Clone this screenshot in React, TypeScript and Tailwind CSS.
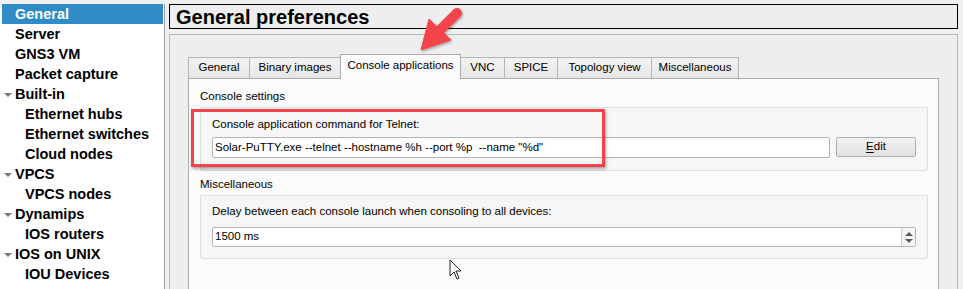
import React from 'react';

const ui = { fontFamily: '"Liberation Sans", Arial, sans-serif' };

type TreeRow = { label: string; level: 0 | 1; expander?: boolean; selected?: boolean };

const rows: TreeRow[] = [
  { label: 'General', level: 0, selected: true },
  { label: 'Server', level: 0 },
  { label: 'GNS3 VM', level: 0 },
  { label: 'Packet capture', level: 0 },
  { label: 'Built-in', level: 0, expander: true },
  { label: 'Ethernet hubs', level: 1 },
  { label: 'Ethernet switches', level: 1 },
  { label: 'Cloud nodes', level: 1 },
  { label: 'VPCS', level: 0, expander: true },
  { label: 'VPCS nodes', level: 1 },
  { label: 'Dynamips', level: 0, expander: true },
  { label: 'IOS routers', level: 1 },
  { label: 'IOS on UNIX', level: 0, expander: true },
  { label: 'IOU Devices', level: 1 },
];

const tabs = [
  { label: 'General', w: 'w-[62px]' },
  { label: 'Binary images', w: 'w-[92px]' },
  { label: 'Console applications', w: 'w-[121px]', active: true },
  { label: 'VNC', w: 'w-[45px]' },
  { label: 'SPICE', w: 'w-[54px]' },
  { label: 'Topology view', w: 'w-[95px]' },
  { label: 'Miscellaneous', w: 'w-[88px]' },
];

function Sidebar() {
  return (
    <div className="mt-[4px] w-[165px] shrink-0 border-r border-[#9c9c9c] bg-white pl-[2px] pr-px">
      {rows.map((r) => (
        <div
          key={r.label}
          className={`relative flex h-[20px] items-center pt-[2px] text-[14.5px] font-bold ${
            r.selected ? 'bg-[#308cc6] text-white' : 'text-black'
          } ${r.level === 1 ? 'pl-[23px]' : 'pl-[13px]'}`}
        >
          {r.expander && (
            <span className="absolute left-[2px] top-[9px] h-0 w-0 border-x-[4px] border-t-[4px] border-x-transparent border-t-[#7a7a7a]" />
          )}
          {r.label}
        </div>
      ))}
    </div>
  );
}

function Tabs() {
  return (
    <div className="flex h-[24px] items-end">
      {tabs.map((t, i) =>
        t.active ? (
          <div
            key={t.label}
            className={`relative z-10 -mb-px -ml-px flex h-[25px] items-center justify-center border-x border-t border-[#acacac] bg-[#fbfbfb] pb-[2px] text-[11.5px] ${t.w}`}
          >
            {t.label}
          </div>
        ) : (
          <div
            key={t.label}
            className={`flex h-[21px] items-center justify-center border-x border-t border-[#b4b4b4] bg-gradient-to-b from-[#f2f2f2] to-[#e6e6e6] text-[11.5px] ${t.w} ${i === 0 ? '' : '-ml-px'}`}
          >
            {t.label}
          </div>
        )
      )}
    </div>
  );
}

function GroupLabel({ children, top }: { children: React.ReactNode; top: string }) {
  return <div className={`flex h-[16px] items-center text-[11.5px] ${top}`}>{children}</div>;
}

function Pane() {
  return (
    <div className="flex-1 border border-[#acacac] bg-[#fbfbfb] pr-[10px] pl-[11px]">
      <GroupLabel top="mt-[10px]">Console settings</GroupLabel>
      <div className="mt-[2px] h-[64px] rounded-[2px] border border-[#dedede] bg-[#f6f6f6] px-[11px] pt-[9px]">
        <div className="flex h-[16px] items-center text-[11.5px]">Console application command for Telnet:</div>
        <div className="mt-[4px] flex h-[21px] gap-[6px]">
          <div className="flex flex-1 items-center rounded-[2px] border border-[#b4b4b4] bg-white pl-[2px] text-[11.5px] whitespace-pre">
            Solar-PuTTY.exe --telnet --hostname %h --port %p  --name "%d"
          </div>
          <div className="flex h-[20px] w-[80px] items-center justify-center rounded-[2px] border border-[#adadad] bg-gradient-to-b from-[#f2f2f2] to-[#e2e2e2] text-[11.5px]">
            <span className="underline underline-offset-[2px]">E</span>dit
          </div>
        </div>
      </div>
      <GroupLabel top="mt-[6px]">Miscellaneous</GroupLabel>
      <div className="mt-[2px] h-[64px] rounded-[2px] border border-[#dedede] bg-[#f6f6f6] px-[11px] pt-[8px]">
        <div className="flex h-[16px] items-center text-[11.5px]">
          Delay between each console launch when consoling to all devices:
        </div>
        <div className="mt-[7px] flex h-[20px] rounded-[2px] border border-[#b4b4b4] bg-white">
          <div className="flex flex-1 items-center pl-[2px] text-[11.5px]">1500 ms</div>
          <div className="flex w-[14px] flex-col items-center justify-center gap-[3px] border-l border-[#d0d0d0] bg-[#f4f4f4]">
            <span className="h-0 w-0 border-x-[4px] border-b-[4px] border-x-transparent border-b-[#5a5a5a]" />
            <span className="h-0 w-0 border-x-[4px] border-t-[4px] border-x-transparent border-t-[#5a5a5a]" />
          </div>
        </div>
      </div>
      <div className="h-[40px]" />
    </div>
  );
}

export default function App() {
  return (
    <div className="relative flex h-[289px] w-[963px] overflow-hidden bg-[#f0f0f0] text-black" style={ui}>
      <Sidebar />
      <div className="ml-[4px] mr-[5px] flex flex-1 flex-col">
        <div className="mt-[4px] flex h-[25px] items-center border border-black bg-[#eeeeee] pl-[6px] text-[20px] font-bold">
          General preferences
        </div>
        <div className="mt-[5px] flex flex-1 flex-col border border-[#b8b8b8] bg-[#eeeeee] pt-[19px] pr-[18px] pl-[18px]">
          <Tabs />
          <Pane />
        </div>
      </div>

      {/* annotation: red highlight box */}
      <div className="pointer-events-none absolute left-[191px] top-[109px] h-[58px] w-[414px] border-[3px] border-[#f2444b] shadow-[1px_2px_3px_rgba(0,0,0,0.35)]" />

      {/* annotation: red arrow */}
      <svg className="pointer-events-none absolute left-[412px] top-[4px]" width="56" height="54" viewBox="0 0 56 54">
        <defs>
          <filter id="sh" x="-20%" y="-20%" width="150%" height="150%">
            <feDropShadow dx="1" dy="1.5" stdDeviation="1.2" floodColor="#000" floodOpacity="0.3" />
          </filter>
        </defs>
        <g filter="url(#sh)" fill="#f4454b" stroke="#f4454b">
          <line x1="45" y1="9" x2="26" y2="28" strokeWidth="10" strokeLinecap="round" />
          <polygon points="9,46 17,15 39,36" strokeWidth="1" strokeLinejoin="round" />
        </g>
      </svg>

      {/* mouse cursor */}
      <svg className="pointer-events-none absolute left-[449px] top-[259px]" width="14" height="22" viewBox="0 0 14 22">
        <path d="M1 1 L1 17 L5 13 L8 20 L10 19 L7 12 L12 12 Z" fill="white" stroke="#222" strokeWidth="1" strokeLinejoin="round" />
      </svg>
    </div>
  );
}
